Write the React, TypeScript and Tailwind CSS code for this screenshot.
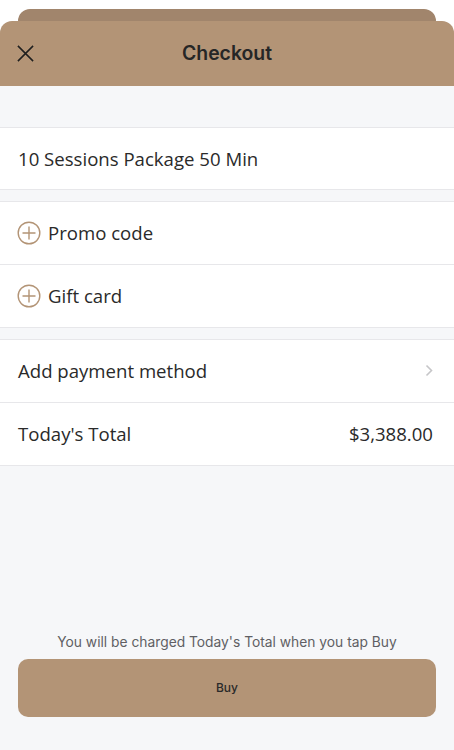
import React from "react";

const rowText = "text-[18.6px] text-[#2a2a2a]";

function PlusCircle() {
  return (
    <svg className="-ml-[1px]" width="24" height="24" viewBox="0 0 24 24" fill="none" stroke="#b39476" strokeWidth="1.4">
      <circle cx="12" cy="12" r="10.8" />
      <path d="M12 5.5v13M5.5 12h13" />
    </svg>
  );
}

function Row({ children, h = "h-[63px]" }: { children: React.ReactNode; h?: string }) {
  return (
    <div className={h + " flex items-center border-b border-[#e7e7ea] bg-white pl-[18px] pr-[21px]"}>
      {children}
    </div>
  );
}

export default function App() {
  return (
    <div
      className="flex h-[750px] w-full flex-col bg-white"
      style={{ fontFamily: '"Open Sans", "Noto Sans", sans-serif' }}
    >
      <div className="px-[18px] pt-[9px]">
        <div className="h-[12px] rounded-t-[12px] bg-[#a1856c]" />
      </div>
      <div className="flex flex-1 flex-col overflow-hidden rounded-t-[12px] bg-[#f6f7f9]">
        <header className="relative flex h-[65px] items-center justify-center bg-[#b39476]">
          <button className="absolute left-[16px] top-[23px]">
            <svg width="19" height="19" viewBox="0 0 20 20" stroke="#1f1f1f" strokeWidth="1.6" fill="none">
              <path d="M2 2l16 16M18 2L2 18" />
            </svg>
          </button>
          <h1
            className="text-[19.4px] font-semibold text-[#262626]"
            style={{ fontFamily: "Inter, sans-serif" }}
          >
            Checkout
          </h1>
        </header>

        <div className="h-[41px]" />

        <div className="border-t border-[#e7e7ea]">
          <Row h="h-[62px]">
            <span className={rowText}>10 Sessions Package 50 Min</span>
          </Row>
        </div>

        <div className="h-[11px]" />

        <div className="border-t border-[#e7e7ea]">
          <Row>
            <div className="flex items-center gap-[7px]">
              <PlusCircle />
              <span className={rowText}>Promo code</span>
            </div>
          </Row>
          <Row>
            <div className="flex items-center gap-[7px]">
              <PlusCircle />
              <span className={rowText}>Gift card</span>
            </div>
          </Row>
        </div>

        <div className="h-[11px]" />

        <div className="border-t border-[#e7e7ea]">
          <Row>
            <div className="flex w-full items-center justify-between">
              <span className={rowText}>Add payment method</span>
              <svg width="8" height="13" viewBox="0 0 8 13" fill="none" stroke="#c6c6c8" strokeWidth="1.6">
                <path d="M1.5 1.5l5 5-5 5" />
              </svg>
            </div>
          </Row>
          <Row>
            <div className="flex w-full items-center justify-between">
              <span className={rowText}>Today's Total</span>
              <span className={rowText}>$3,388.00</span>
            </div>
          </Row>
        </div>

        <div className="flex-1" />

        <div
          className="flex flex-col items-center px-[18px] pb-[33px]"
          style={{ fontFamily: "Inter, sans-serif" }}
        >
          <p className="text-[13.8px] text-[#5f5f64]">
            You will be charged Today's Total when you tap Buy
          </p>
          <button className="mt-[6px] flex h-[58px] w-full items-center justify-center rounded-[10px] bg-[#b39476] text-[12px] font-medium text-[#2a2a2a]">
            Buy
          </button>
        </div>
      </div>
    </div>
  );
}
